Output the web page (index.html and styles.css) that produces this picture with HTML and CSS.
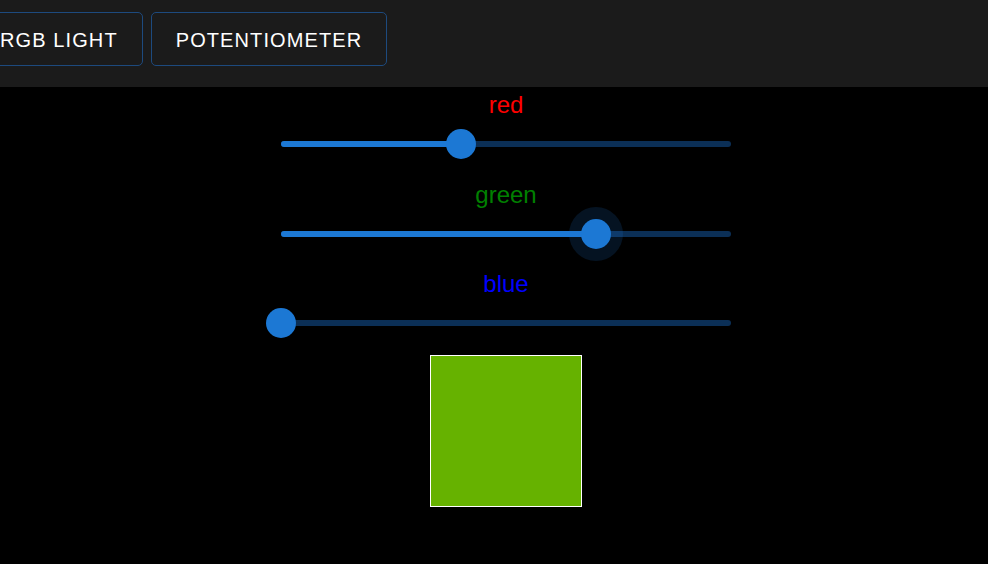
FILE: index.html
```html
<!DOCTYPE html>
<html lang="en">
<head>
    <meta charset="UTF-8">
    <meta name="viewport" content="width=device-width, initial-scale=1.0">
    <title>RGB Light</title>
    <link rel="stylesheet" href="styles.css">
</head>
<body>
    <header class="topbar">
        <nav class="nav">
            <button class="nav-btn">RGB LIGHT</button>
            <button class="nav-btn">POTENTIOMETER</button>
        </nav>
    </header>

    <main class="mixer">
        <div class="channel">
            <div class="channel-label red">red</div>
            <div class="slider">
                <div class="track"></div>
                <div class="fill" style="width: 40%"></div>
                <div class="thumb" style="left: 40%"></div>
            </div>
        </div>
        <div class="channel">
            <div class="channel-label green">green</div>
            <div class="slider">
                <div class="track"></div>
                <div class="fill" style="width: 70%"></div>
                <div class="thumb focused" style="left: 70%"></div>
            </div>
        </div>
        <div class="channel channel-last">
            <div class="channel-label blue">blue</div>
            <div class="slider">
                <div class="track"></div>
                <div class="fill" style="width: 0%"></div>
                <div class="thumb" style="left: 0%"></div>
            </div>
        </div>
        <div class="swatch" style="background-color: rgb(102, 178, 0)"></div>
    </main>
</body>
</html>
```

FILE: styles.css
```css
body {
    font-family: "Liberation Sans", Arial, sans-serif;
    background-color: #000;
    margin: 0;
    padding: 0;
    overflow: hidden;
}
.topbar {
    background-color: #1b1b1b;
    height: 87px;
    display: flex;
    align-items: center;
}
.nav {
    display: flex;
    gap: 8px;
    margin-left: -25px;
    margin-top: -10px;
}
.nav-btn {
    font-family: inherit;
    background: transparent;
    color: #fff;
    border: 1px solid #1d4a7e;
    border-radius: 5px;
    height: 54px;
    padding: 3px 24px 0;
    font-size: 20px;
    letter-spacing: 1.1px;
}
.mixer {
    display: flex;
    flex-direction: column;
    align-items: center;
    padding: 4px 0 0 24px;
    gap: 11px;
}
.channel {
    width: 450px;
    display: flex;
    flex-direction: column;
    align-items: center;
}
.channel-last {
    margin-top: -1px;
}
.channel-label {
    font-size: 24px;
    line-height: 28px;
}
.red { color: #f00; }
.green { color: #008000; }
.blue { color: #00f; }
.slider {
    position: relative;
    width: 100%;
    height: 51px;
}
.track,
.fill {
    position: absolute;
    left: 0;
    top: 22px;
    height: 6px;
    border-radius: 3px;
}
.track {
    width: 100%;
    background-color: #0b2f56;
}
.fill {
    background-color: #1c78d4;
}
.thumb {
    position: absolute;
    top: 25px;
    width: 30px;
    height: 30px;
    margin: -15px 0 0 -15px;
    border-radius: 50%;
    background-color: #1c78d4;
}
.thumb.focused {
    box-shadow: 0 0 0 12px rgba(28, 120, 212, 0.16);
}
.swatch {
    width: 150px;
    height: 150px;
    border: 1px solid #fff;
    margin-top: -5px;
}
```
